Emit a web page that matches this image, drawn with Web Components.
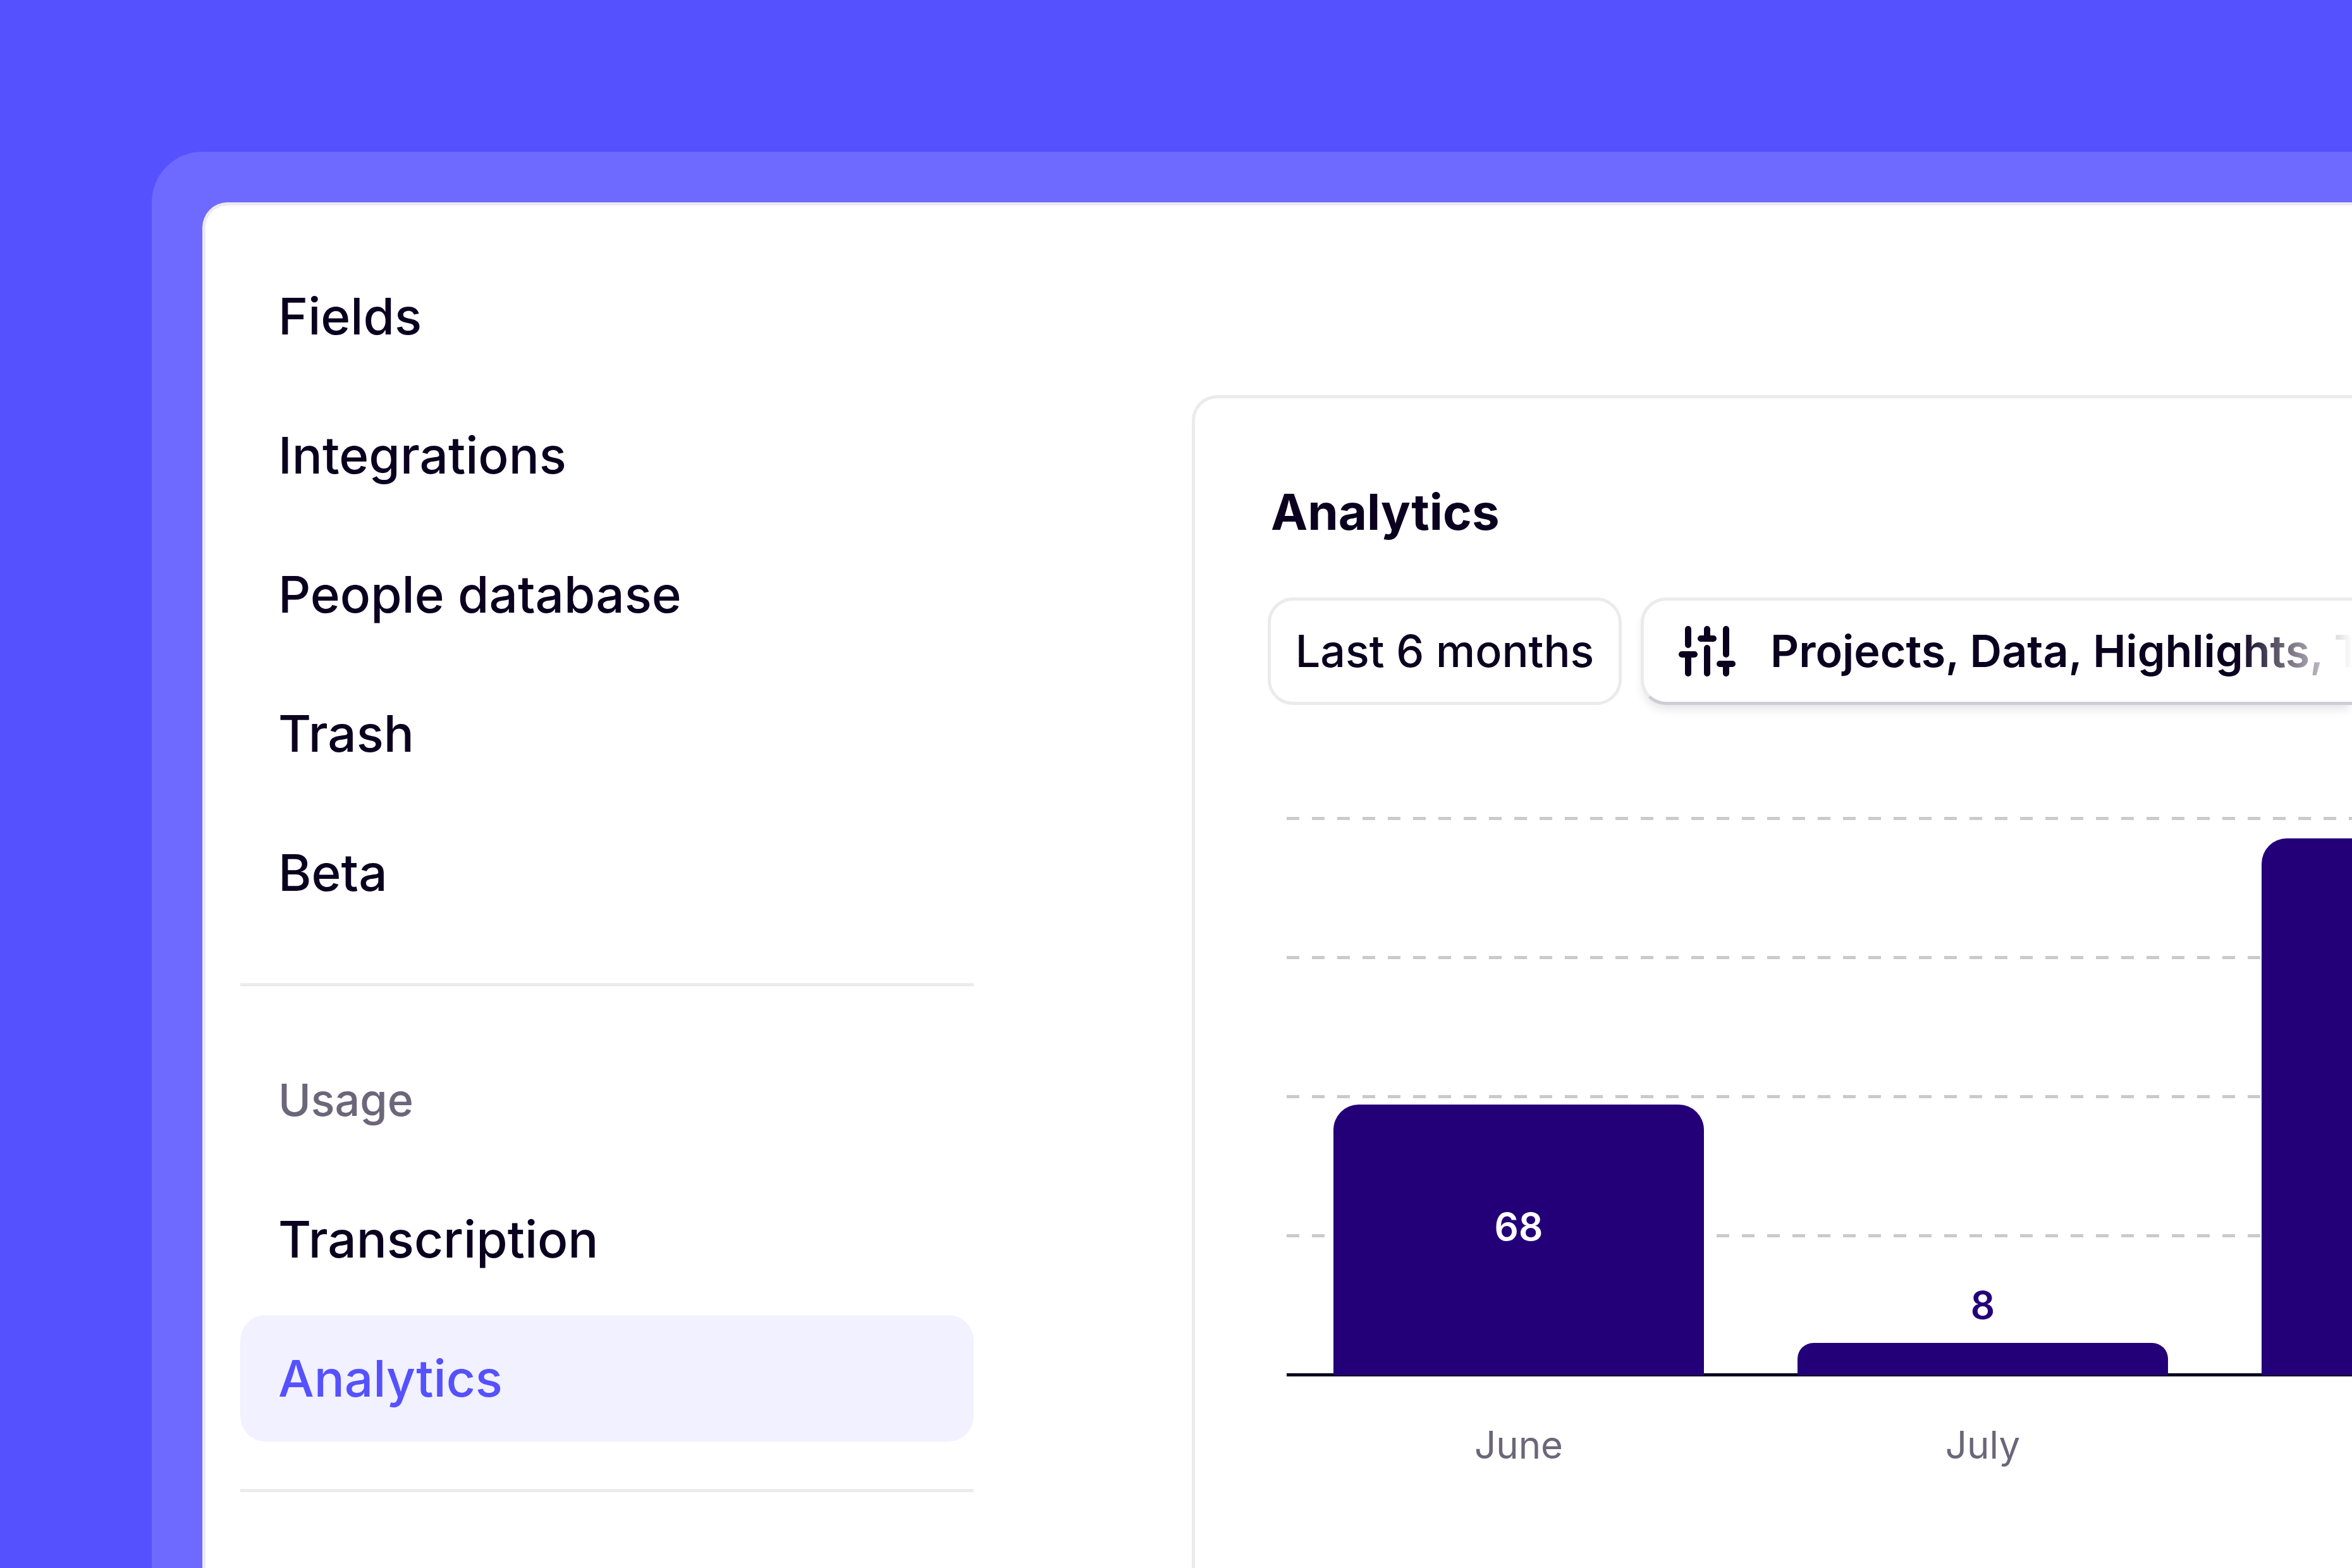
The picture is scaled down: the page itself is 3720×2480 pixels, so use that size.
<!DOCTYPE html>
<html lang="en">
<head>
<meta charset="utf-8">
<title>Analytics</title>
<style>
  :root {
    --brand: #5551ff;
    --brand-soft: #f2f1ff;
    --ink: #0b001f;
    --muted: #6c667a;
    --line: #ebebec;
    --bar: #240078;
  }
  body {
    margin: 0;
    overflow: hidden;
    background: var(--brand);
    color: var(--ink);
    font-family: Inter, "Liberation Sans", sans-serif;
    font-size: 80px;
  }
</style>
</head>
<body>
<app-frame>
  <side-nav slot="nav">
    <nav-item>Fields</nav-item>
    <nav-item>Integrations</nav-item>
    <nav-item>People database</nav-item>
    <nav-item>Trash</nav-item>
    <nav-item>Beta</nav-item>
    <nav-divider></nav-divider>
    <nav-heading>Usage</nav-heading>
    <nav-item>Transcription</nav-item>
    <nav-item active>Analytics</nav-item>
    <nav-divider></nav-divider>
  </side-nav>
  <analytics-card>
    <span slot="title">Analytics</span>
    <filter-button slot="filters">Last 6 months</filter-button>
    <filter-button slot="filters" raised>
      <sliders-icon slot="icon"></sliders-icon>Projects, Data, Highlights, T</filter-button>
    <bar-chart>
      <chart-bar label="June" value="68" style="--size:428px"></chart-bar>
      <chart-bar label="July" value="8" outside style="--size:51px"></chart-bar>
      <chart-bar style="--size:849px"></chart-bar>
    </bar-chart>
  </analytics-card>
</app-frame>

<script>
  const define = (name, html) => {
    const template = document.createElement('template');
    template.innerHTML = html;
    customElements.define(name, class extends HTMLElement {
      constructor() {
        super();
        this.attachShadow({ mode: 'open' }).append(template.content.cloneNode(true));
      }
      connectedCallback() {
        for (const part of this.shadowRoot.querySelectorAll('[data-text]')) {
          const text = this.getAttribute(part.dataset.text);
          if (text) part.textContent = text;
          else part.remove();
        }
      }
    });
  };

  define('app-frame', `
    <style>
      :host { display: block; padding: 240px 0 0 240px; }
      .frame { padding: 80px 0 0 80px; border-radius: 80px 0 0 0; background: rgb(255 255 255 / .15); }
      .panel {
        display: grid; grid-template-columns: 1160px minmax(0, 1fr); column-gap: 345px; align-items: stretch;
        box-sizing: border-box; min-height: calc(100vh - 320px); padding-left: 55px;
        border: solid #eceaf0; border-width: 5px 0 0 5px; border-radius: 40px 0 0 0; background: #fff;
      }
      main { display: grid; grid-template-columns: minmax(0, 1fr); padding-top: 300px; }
    </style>
    <div class="frame"><div class="panel"><slot name="nav"></slot><main><slot></slot></main></div></div>`);

  define('side-nav', `
    <style>
      :host { display: block; }
      nav { display: flex; flex-direction: column; gap: 20px; padding-top: 75px; }
    </style>
    <nav aria-label="Settings"><slot></slot></nav>`);

  define('nav-item', `
    <style>
      :host { display: block; }
      a {
        display: block; padding: 0 60px; border-radius: 40px;
        color: var(--ink); font-weight: 500; line-height: 200px; text-decoration: none;
      }
      :host([active]) a { background: var(--brand-soft); color: var(--brand); }
    </style>
    <a href="#"><slot></slot></a>`);

  define('nav-heading', `
    <style>
      :host { display: block; padding: 0 60px; color: var(--muted); font-size: 70px; font-weight: 500; line-height: 200px; }
    </style>
    <slot></slot>`);

  define('nav-divider', `
    <style>
      :host { display: block; padding: 55px 0 60px; }
      hr { height: 5px; margin: 0; border: 0; background: var(--line); }
    </style>
    <hr>`);

  define('analytics-card', `
    <style>
      :host {
        display: block; padding: 130px 0 0 115px;
        border: solid var(--line); border-width: 5px 0 0 5px; border-radius: 40px 0 0 0;
      }
      h1 { margin: 0 0 85px; padding-left: 5px; font-size: 78px; font-weight: 700; line-height: 100px; }
      .filters { display: flex; gap: 30px; margin-bottom: 177px; }
    </style>
    <h1><slot name="title"></slot></h1>
    <div class="filters"><slot name="filters"></slot></div>
    <slot></slot>`);

  define('filter-button', `
    <style>
      :host { display: block; flex: none; width: 560px; }
      :host([raised]) { flex: 1; width: auto; min-width: 0; }
      button {
        display: flex; align-items: center; justify-content: center; gap: 50px;
        box-sizing: border-box; width: 100%; height: 170px; padding: 0;
        border: 5px solid var(--line); border-radius: 40px; background: #fff;
        color: var(--ink); font: 500 70px/100px Inter, "Liberation Sans", sans-serif; white-space: nowrap;
      }
      :host([raised]) button {
        padding: 0 0 0 50px; border-right: 0; border-bottom-color: #cecdd5; border-radius: 40px 0 0 40px;
        box-shadow: 0 10px 15px -3px rgb(11 0 31 / .1); font-weight: 600;
      }
      span { flex: none; }
      :host([raised]) span {
        flex: 1; min-width: 0; overflow: hidden; text-align: left;
        -webkit-mask-image: linear-gradient(to left, transparent, #000 180px);
        mask-image: linear-gradient(to left, transparent, #000 180px);
      }
    </style>
    <button type="button"><slot name="icon"></slot><span><slot></slot></span></button>`);

  define('sliders-icon', `
    <style>
      :host { display: block; flex: none; }
      svg { display: block; width: 100px; height: 100px; }
    </style>
    <svg viewBox="0 0 100 100" fill="none" stroke="currentColor" stroke-width="10" stroke-linecap="round" aria-hidden="true">
      <path d="M20 15V40M10 55H30M20 55V85M50 15V30M40 30H60M50 45V85M80 15V55M70 70H90M80 70V85"/>
    </svg>`);

  define('bar-chart', `
    <style>
      :host { display: grid; grid-template-columns: minmax(0, 1fr); margin-left: 30px; overflow: hidden; }
      .grid, .bars { grid-area: 1 / 1; }
      .grid { display: flex; flex-direction: column; justify-content: space-between; height: 885px; }
      i { height: 5px; background: repeating-linear-gradient(to right, #cacaca 0 20px, transparent 20px 40px); }
      i:last-child { background: var(--ink); }
      .bars { display: grid; grid-auto-flow: column; grid-auto-columns: 734px; align-items: start; overflow: hidden; }
    </style>
    <div class="grid"><i></i><i></i><i></i><i></i><i></i></div>
    <div class="bars"><slot></slot></div>`);

  define('chart-bar', `
    <style>
      :host { display: block; text-align: center; font-size: 60px; line-height: 80px; }
      .plot { display: flex; flex-direction: column; justify-content: flex-end; height: 883px; padding: 0 74px; }
      .bar {
        display: flex; flex-direction: column; box-sizing: border-box; height: var(--size); padding-top: 153px;
        border-radius: 40px 40px 0 0; background: var(--bar); color: #fff;
      }
      .value { font-weight: 600; }
      .above { display: none; padding-bottom: 20px; color: var(--bar); font-weight: 600; }
      :host([outside]) .above { display: block; }
      :host([outside]) .value { display: none; }
      :host([outside]) .bar { padding-top: 0; border-radius: 25px 25px 0 0; }
      .label { padding: 70px 0 20px; color: var(--muted); }
    </style>
    <div class="plot"><span class="above" data-text="value"></span><div class="bar"><span class="value" data-text="value"></span></div></div>
    <div class="label" data-text="label"></div>`);
</script>
</body>
</html>
